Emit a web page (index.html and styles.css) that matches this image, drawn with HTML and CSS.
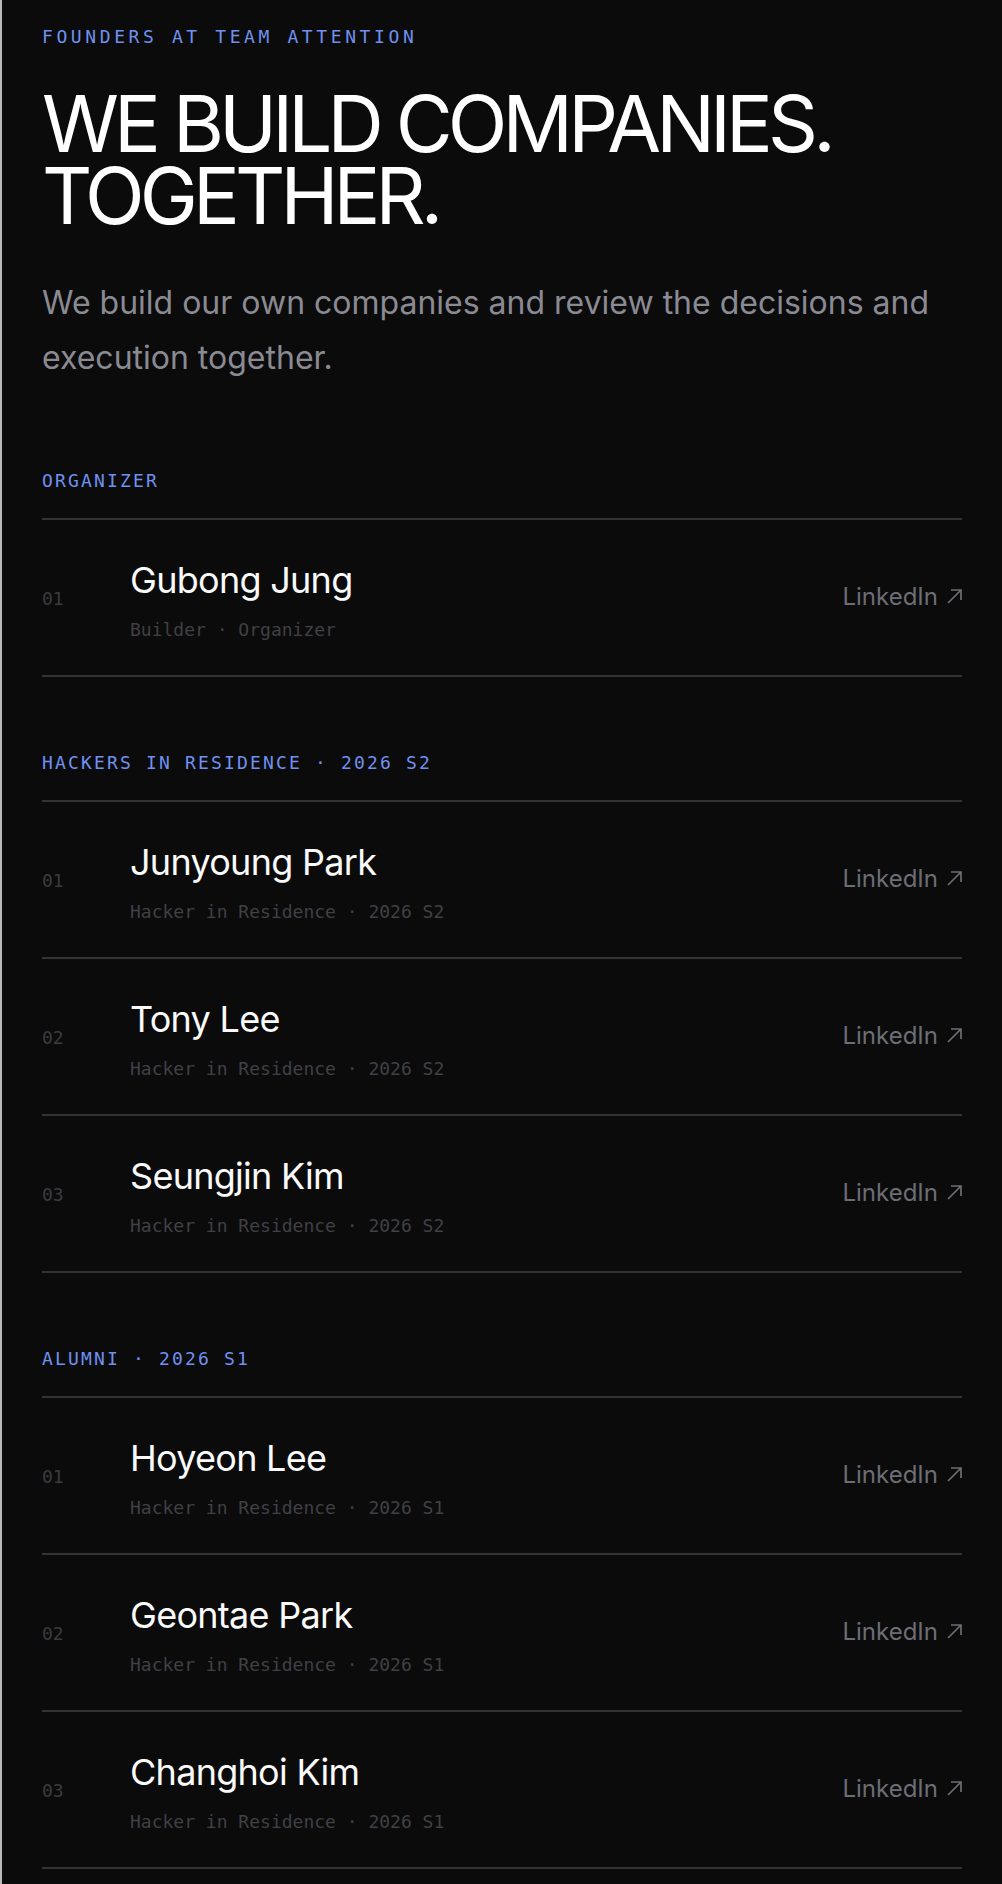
FILE: index.html
```html
<!DOCTYPE html>
<html lang="en">
<head>
    <meta charset="UTF-8">
    <meta name="viewport" content="width=device-width, initial-scale=1.0">
    <title>Founders at Team Attention</title>
    <link rel="stylesheet" href="styles.css">
</head>
<body>
    <main class="page">
        <p class="eyebrow">Founders at Team Attention</p>
        <h1 class="title">We build companies.<br>Together.</h1>
        <p class="lead">We build our own companies and review the decisions and execution together.</p>

        <section class="group">
            <h2 class="group-label">Organizer</h2>
            <ul class="people">
                <li class="person">
                    <span class="num">01</span>
                    <div class="who">
                        <div class="name">Gubong Jung</div>
                        <div class="role">Builder · Organizer</div>
                    </div>
                    <a class="link" href="#">LinkedIn <svg viewBox="0 0 15 15" width="15" height="15"><path d="M1 14 L14 1 M4 1 H14 V11"/></svg></a>
                </li>
            </ul>
        </section>

        <section class="group">
            <h2 class="group-label">Hackers in Residence · 2026 S2</h2>
            <ul class="people">
                <li class="person">
                    <span class="num">01</span>
                    <div class="who">
                        <div class="name">Junyoung Park</div>
                        <div class="role">Hacker in Residence · 2026 S2</div>
                    </div>
                    <a class="link" href="#">LinkedIn <svg viewBox="0 0 15 15" width="15" height="15"><path d="M1 14 L14 1 M4 1 H14 V11"/></svg></a>
                </li>
                <li class="person">
                    <span class="num">02</span>
                    <div class="who">
                        <div class="name">Tony Lee</div>
                        <div class="role">Hacker in Residence · 2026 S2</div>
                    </div>
                    <a class="link" href="#">LinkedIn <svg viewBox="0 0 15 15" width="15" height="15"><path d="M1 14 L14 1 M4 1 H14 V11"/></svg></a>
                </li>
                <li class="person">
                    <span class="num">03</span>
                    <div class="who">
                        <div class="name">Seungjin Kim</div>
                        <div class="role">Hacker in Residence · 2026 S2</div>
                    </div>
                    <a class="link" href="#">LinkedIn <svg viewBox="0 0 15 15" width="15" height="15"><path d="M1 14 L14 1 M4 1 H14 V11"/></svg></a>
                </li>
            </ul>
        </section>

        <section class="group">
            <h2 class="group-label">Alumni · 2026 S1</h2>
            <ul class="people">
                <li class="person">
                    <span class="num">01</span>
                    <div class="who">
                        <div class="name">Hoyeon Lee</div>
                        <div class="role">Hacker in Residence · 2026 S1</div>
                    </div>
                    <a class="link" href="#">LinkedIn <svg viewBox="0 0 15 15" width="15" height="15"><path d="M1 14 L14 1 M4 1 H14 V11"/></svg></a>
                </li>
                <li class="person">
                    <span class="num">02</span>
                    <div class="who">
                        <div class="name">Geontae Park</div>
                        <div class="role">Hacker in Residence · 2026 S1</div>
                    </div>
                    <a class="link" href="#">LinkedIn <svg viewBox="0 0 15 15" width="15" height="15"><path d="M1 14 L14 1 M4 1 H14 V11"/></svg></a>
                </li>
                <li class="person">
                    <span class="num">03</span>
                    <div class="who">
                        <div class="name">Changhoi Kim</div>
                        <div class="role">Hacker in Residence · 2026 S1</div>
                    </div>
                    <a class="link" href="#">LinkedIn <svg viewBox="0 0 15 15" width="15" height="15"><path d="M1 14 L14 1 M4 1 H14 V11"/></svg></a>
                </li>
            </ul>
        </section>
    </main>
</body>
</html>
```

FILE: styles.css
```css
/* base */
body {
    margin: 0;
    background: #0b0b0b;
    color: #f5f5f5;
    font-family: 'Inter', 'Noto Sans', sans-serif;
    border-left: 2px solid #b9b9b9;
}
.page {
    padding: 26px 40px 40px;
}

/* header */
.eyebrow {
    margin: 0;
    font-family: 'DejaVu Sans Mono', monospace;
    font-size: 18px;
    line-height: 21px;
    letter-spacing: 0.2em;
    text-transform: uppercase;
    color: #7091f0;
}
.title {
    margin: 41px 0 0;
    font-size: 78px;
    font-weight: 400;
    line-height: 72px;
    letter-spacing: -0.063em;
    text-transform: uppercase;
    color: #fff;
}
.lead {
    margin: 43px 0 0;
    font-size: 32px;
    line-height: 55px;
    color: #8a8a93;
}

/* groups */
.group {
    margin-top: 75px;
}
.group:first-of-type {
    margin-top: 85px;
}
.group-label {
    margin: 0 0 27px;
    font-family: 'DejaVu Sans Mono', monospace;
    font-size: 18px;
    font-weight: 400;
    line-height: 21px;
    letter-spacing: 0.12em;
    text-transform: uppercase;
    color: #7091f0;
}
.people {
    list-style: none;
    margin: 0;
    padding: 0;
    border-top: 2px solid #333336;
}
.person {
    display: grid;
    grid-template-columns: 88px 1fr auto;
    align-items: center;
    padding: 34px 0 33px;
    border-bottom: 2px solid #333336;
}
.num {
    font-family: 'DejaVu Sans Mono', monospace;
    font-size: 18px;
    color: #3b3b40;
}
.name {
    font-size: 36px;
    line-height: 52px;
    letter-spacing: -0.02em;
    color: #fafafa;
}
.role {
    margin-top: 11px;
    font-family: 'DejaVu Sans Mono', monospace;
    font-size: 18px;
    line-height: 25px;
    color: #404046;
}
.link {
    display: flex;
    align-items: center;
    gap: 9px;
    margin-bottom: 3px;
    font-size: 24px;
    color: #6d6d75;
    text-decoration: none;
}
.link svg {
    fill: none;
    stroke: currentColor;
    stroke-width: 1.7;
}
```
